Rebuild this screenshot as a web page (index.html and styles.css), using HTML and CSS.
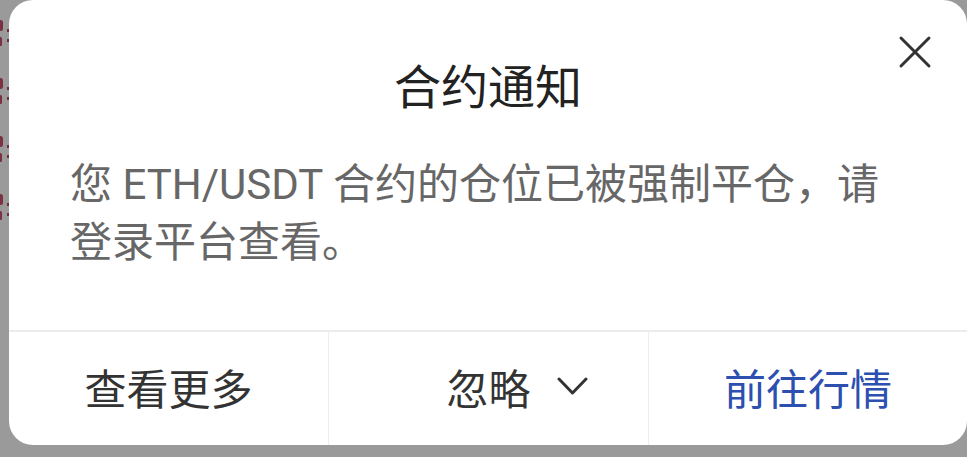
FILE: index.html
```html
<!DOCTYPE html>
<html lang="zh-CN">

<head>
  <meta charset="UTF-8">
  <meta name="viewport" content="width=device-width, initial-scale=1.0">
  <title>合约通知</title>
  <link rel="stylesheet" href="styles.css">
</head>

<body>
  <!-- 背后的页面，只露出左边一点 -->
  <div class="behind">
    <i class="mark"></i>
    <i class="mark"></i>
    <i class="mark"></i>
    <i class="mark"></i>
  </div>

  <div class="dialog">
    <button class="close" aria-label="关闭">
      <svg width="34" height="34" viewBox="0 0 34 34">
        <path d="M3 3 L31 31 M31 3 L3 31" stroke="#333" stroke-width="3" stroke-linecap="round" fill="none" />
      </svg>
    </button>

    <h2 class="title">合约通知</h2>
    <p class="content">您 ETH/USDT 合约的仓位已被强制平仓，请<br>登录平台查看。</p>

    <div class="actions">
      <a class="action">查看更多</a>
      <a class="action action-more">
        <span>忽略</span>
        <svg width="31" height="19" viewBox="0 0 31 19">
          <path d="M2 2 L15.5 16 L29 2" stroke="#333" stroke-width="3" stroke-linecap="round" stroke-linejoin="round" fill="none" />
        </svg>
      </a>
      <a class="action action-primary">前往行情</a>
    </div>
  </div>
</body>

</html>
```

FILE: styles.css
```css
html,body{
  margin: 0;
  padding: 0;
  height: 100%;
}
body{
  position: relative;
  overflow: hidden;
  background: #9a9a9a;
  font-family: Roboto, "Noto Sans CJK SC", sans-serif;
}
/* 背景页面露出的红色字迹 */
.behind{
  display: flex;
  flex-direction: column;
  gap: 34px;
  width: 9px;
  padding-top: 20px;
}
.mark{
  position: relative;
  display: block;
  height: 24px;
}
.mark::before{
  content: "";
  position: absolute;
  left: -2px;
  top: 0;
  width: 5px;
  height: 11px;
  border-radius: 3px;
  background: #7b3142;
  box-shadow: 0 16px 0 -1px #7b3142;
}
.mark::after{
  content: "";
  position: absolute;
  left: 7px;
  top: 9px;
  width: 2px;
  height: 3px;
  background: #6d3040;
  box-shadow: 0 10px 0 #6d3040;
}

/* 弹窗 */
.dialog{
  position: absolute;
  top: 0;
  left: 9px;
  width: 958px;
  height: 445px;
  display: flex;
  flex-direction: column;
  background: #fff;
  border-radius: 24px;
  overflow: hidden;
}
.close{
  position: absolute;
  top: 35px;
  right: 35px;
  padding: 0;
  border: 0;
  background: none;
  line-height: 0;
}
.title{
  margin: 56px 0 0;
  text-align: center;
  color: #222;
  font-size: 47px;
  font-weight: 400;
  line-height: 64px;
}
.content{
  flex: 1;
  margin: 36px 0 0;
  padding: 0 50px 0 61px;
  color: #676767;
  font-size: 42px;
  line-height: 58px;
}
.actions{
  display: grid;
  grid-template-columns: 319px 320px 1fr;
  height: 113px;
  border-top: 2px solid #ececec;
}
.action{
  display: flex;
  align-items: center;
  justify-content: center;
  gap: 26px;
  color: #333;
  font-size: 42px;
  padding-bottom: 4px;
}
.action + .action{
  border-left: 1px solid #eeeeee;
}
.action-more{
  padding-left: 57px;
}
.action-primary{
  color: #2c4fb0;
}
```
